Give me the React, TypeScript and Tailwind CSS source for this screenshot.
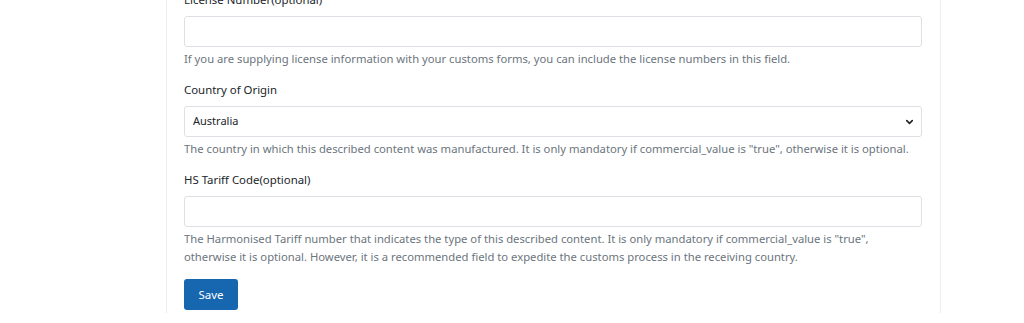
import { ChevronDown } from 'lucide-react';

const font = { fontFamily: '"Noto Sans", "Open Sans", sans-serif' };

interface FieldProps {
  label: string;
  help: React.ReactNode;
  children: React.ReactNode;
  first?: boolean;
}

const Field = ({ label, help, children, first }: FieldProps) => (
  <div className={first ? 'mt-[-10px]' : 'mt-3'}>
    <label className="block text-[11.4px] leading-5 text-[#212529] mb-1.5">{label}</label>
    {children}
    <p className="mt-[3px] text-[11.25px] leading-[18px] text-[#6c757d]">{help}</p>
  </div>
);

const inputCls =
  'block w-full h-[31px] rounded-[3px] border border-[#dde1e6] bg-white px-2 text-[11px] text-[#212529] outline-none';

export default function App() {
  return (
    <div className="min-h-[323px] bg-white overflow-hidden" style={font}>
      <div className="ml-[166px] w-[775px] min-h-[323px] border-x border-[#eceef1] bg-white pl-[17px] pr-[18px]">
        <Field
          first
          label="License Number(optional)"
          help="If you are supplying license information with your customs forms, you can include the license numbers in this field."
        >
          <input className={inputCls} />
        </Field>

        <Field
          label="Country of Origin"
          help='The country in which this described content was manufactured. It is only mandatory if commercial_value is "true", otherwise it is optional.'
        >
          <div className="relative">
            <select
              className={`${inputCls} appearance-none pr-8`}
              defaultValue="AU"
              style={font}
            >
              <option value="AU">Australia</option>
            </select>
            <ChevronDown
              className="absolute right-[7px] top-1/2 -translate-y-1/2 text-[#212529] pointer-events-none"
              size={11}
              strokeWidth={3.5}
            />
          </div>
        </Field>

        <Field
          label="HS Tariff Code(optional)"
          help={
            <>
              The Harmonised Tariff number that indicates the type of this described content. It is only mandatory if commercial_value is "true",
              <br />
              otherwise it is optional. However, it is a recommended field to expedite the customs process in the receiving country.
            </>
          }
        >
          <input className={inputCls} />
        </Field>

        <button
          className="mt-[13px] h-[31px] w-[54px] rounded-[3px] bg-[#1766b0] text-white text-[11.5px]"
          style={font}
        >
          Save
        </button>
      </div>
    </div>
  );
}
